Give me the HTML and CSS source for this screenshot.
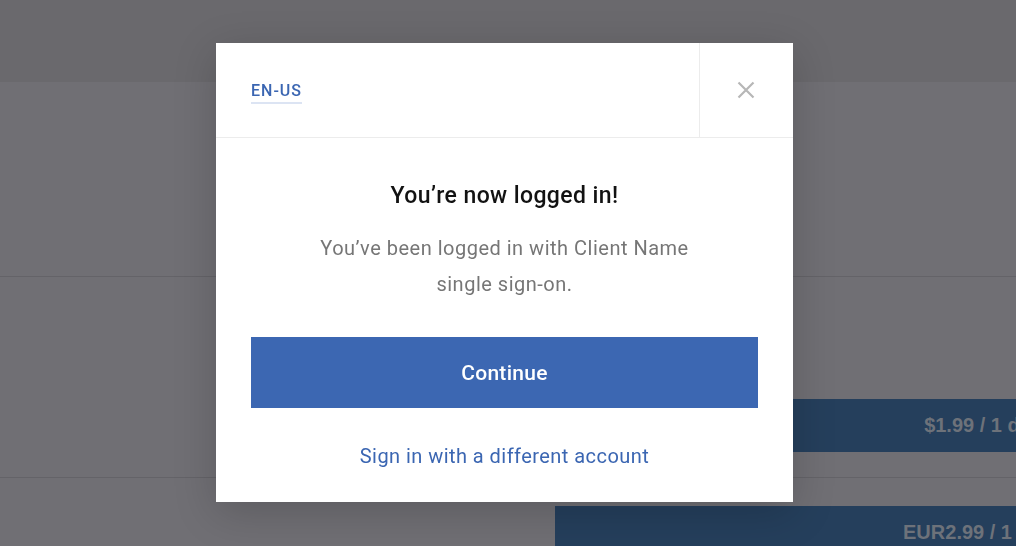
FILE: index.html
```html
<!DOCTYPE html>
<html lang="en">
<head>
  <meta charset="UTF-8">
  <meta name="viewport" content="width=device-width, initial-scale=1.0" />
  <title>Logged in</title>
  <link rel="stylesheet" href="styles.css">
</head>
<body>
  <!-- page behind the dialog -->
  <div class="page">
    <div class="topbar"></div>
    <div class="row row-intro"></div>
    <div class="row row-plan">
      <div class="price-bar price-day">$1.99 / 1 day</div>
    </div>
    <div class="row row-plan-2">
      <div class="price-bar">EUR2.99 / 1 day</div>
    </div>
  </div>

  <div class="overlay">
    <div class="modal">
      <div class="modal-header">
        <div class="lang-cell">
          <a class="lang" href="#">EN-US</a>
        </div>
        <button class="close-btn" aria-label="Close">
          <svg width="18" height="18" viewBox="0 0 18 18">
            <path d="M1.5 1.5 L16.5 16.5 M16.5 1.5 L1.5 16.5" stroke="#b7b7b7" stroke-width="2.2" fill="none"/>
          </svg>
        </button>
      </div>
      <div class="modal-body">
        <h2>You’re now logged in!</h2>
        <p>You’ve been logged in with Client Name<br>single sign-on.</p>
        <button class="continue-btn">Continue</button>
        <a class="switch-link" href="#">Sign in with a different account</a>
      </div>
    </div>
  </div>
</body>
</html>
```

FILE: styles.css
```css
body {
  margin: 0;
  padding: 0;
  height: 100vh;
  overflow: hidden;
  background: #706f74;
  font-family: Roboto, "Noto Sans", sans-serif;
}

.page {
  width: 1100px;
}

.topbar {
  height: 82px;
  background: #6a696d;
}

.row {
  border-bottom: 1px solid #646368;
}

.row-intro {
  height: 194px;
}

.row-plan {
  height: 201px;
  padding-top: 122px;
  box-sizing: border-box;
}

.row-plan-2 {
  padding-top: 28px;
  border-bottom: none;
}

.price-bar {
  margin-left: 555px;
  width: 497px;
  height: 53px;
  background: #253f5c;
  color: #6d727a;
  font-family: "Liberation Sans", Arial, sans-serif;
  font-weight: bold;
  font-size: 20px;
  line-height: 53px;
  text-align: right;
}

.price-day {
  width: 487px;
}

.overlay {
  position: fixed;
  top: 0;
  left: 0;
  right: 0;
  bottom: 0;
  padding: 43px 0 0 216px;
}

.modal {
  width: 577px;
  background: #fff;
  box-shadow: 0 10px 40px rgba(0, 0, 0, 0.18);
}

.modal-header {
  display: flex;
  height: 94px;
  border-bottom: 1px solid #ececec;
}

.lang-cell {
  flex: 1;
  display: flex;
  align-items: center;
  padding-left: 35px;
  border-right: 1px solid #ececec;
}

.lang {
  color: #3b66b2;
  text-decoration: none;
  font-size: 16px;
  font-weight: 500;
  letter-spacing: 1px;
  padding-bottom: 2px;
  border-bottom: 2px solid #dce4f3;
  margin-top: 5px;
}

.close-btn {
  width: 93px;
  border: none;
  background: none;
  padding: 0 2px 0 0;
  display: flex;
  align-items: center;
  justify-content: center;
  cursor: pointer;
}

.modal-body {
  padding: 43px 35px 32px;
  display: flex;
  flex-direction: column;
  align-items: center;
  text-align: center;
}

h2 {
  margin: 0;
  font-size: 23px;
  font-weight: 500;
  letter-spacing: 0.4px;
  line-height: 30px;
  color: #121212;
}

p {
  margin: 19px 0 0;
  font-size: 20px;
  letter-spacing: 0.5px;
  line-height: 36px;
  color: #767676;
}

.continue-btn {
  margin-top: 35px;
  width: 100%;
  height: 71px;
  border: none;
  background: #3c67b2;
  color: #fff;
  font-family: inherit;
  font-size: 21px;
  font-weight: 500;
  letter-spacing: 0.3px;
  cursor: pointer;
}

.switch-link {
  margin-top: 34px;
  color: #3b66b2;
  text-decoration: none;
  font-size: 20px;
  letter-spacing: 0.45px;
  line-height: 28px;
}
```
